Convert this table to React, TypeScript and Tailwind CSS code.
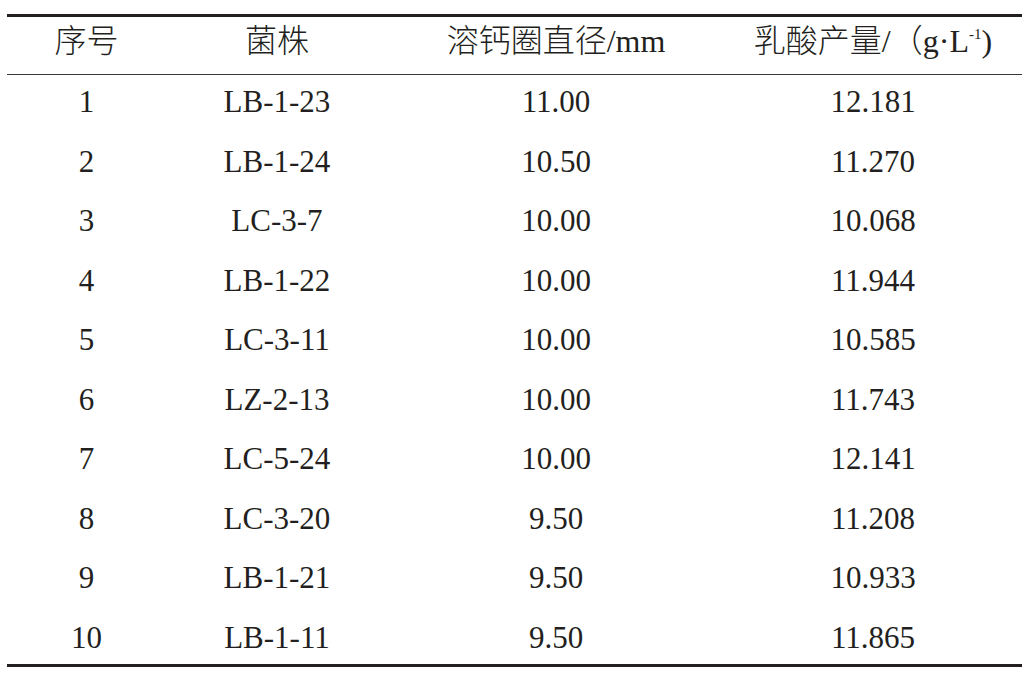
import React from "react";

const rows: [string, string, string, string][] = [
  ["1", "LB-1-23", "11.00", "12.181"],
  ["2", "LB-1-24", "10.50", "11.270"],
  ["3", "LC-3-7", "10.00", "10.068"],
  ["4", "LB-1-22", "10.00", "11.944"],
  ["5", "LC-3-11", "10.00", "10.585"],
  ["6", "LZ-2-13", "10.00", "11.743"],
  ["7", "LC-5-24", "10.00", "12.141"],
  ["8", "LC-3-20", "9.50", "11.208"],
  ["9", "LB-1-21", "9.50", "10.933"],
  ["10", "LB-1-11", "9.50", "11.865"],
];

const grid = "grid grid-cols-[159px_222px_336px_298px]";

export default function App() {
  return (
    <div
      className="w-[1035px] h-[673px] bg-white text-[#231f20] pl-[7px] pt-[14px]"
      style={{ fontFamily: '"Liberation Serif", "Noto Sans CJK SC", serif' }}
    >
      <div className="w-[1015px]">
        <div className="h-[2.5px] bg-[#231f20]" />
        <div className={`${grid} h-[57px] pb-[8px] items-center text-[32px] leading-none font-light`}>
          <div className="text-center">序号</div>
          <div className="text-center">菌株</div>
          <div className="text-center">溶钙圈直径/mm</div>
          <div className="text-center whitespace-nowrap">
            乳酸产量/（g·L<span className="text-[15px] relative -top-[13px]">-1</span>)
          </div>
        </div>
        <div className="h-[1.5px] bg-[#3a3637]" />
        <div className="flex flex-col gap-[6px]">
          {rows.map((r) => (
            <div key={r[0]} className={`${grid} h-[53.5px] items-center text-[31px] leading-none`}>
              <div className="text-center">{r[0]}</div>
              <div className="text-center">{r[1]}</div>
              <div className="text-center">{r[2]}</div>
              <div className="text-center">{r[3]}</div>
            </div>
          ))}
        </div>
        <div className="h-[2.5px] bg-[#231f20]" />
      </div>
    </div>
  );
}
